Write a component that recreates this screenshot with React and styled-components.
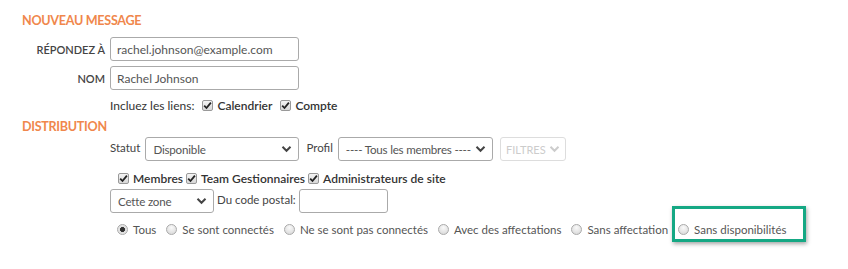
import React from 'react'
import styled, { createGlobalStyle } from 'styled-components'

const Global = createGlobalStyle`
  body {
    margin: 0;
    background: #fff;
    font-family: "Lato", "Open Sans", sans-serif;
    color: #333;
  }
`

const Chevron = () => (
  <svg width="11" height="8" viewBox="0 0 11 8">
    <path d="M1.5 1.8 L5.5 5.8 L9.5 1.8" fill="none" stroke="currentColor" strokeWidth="2" />
  </svg>
)

function Check({ label }) {
  return (
    <CheckItem>
      <CheckBox>
        <svg width="9" height="9" viewBox="0 0 9 9">
          <path d="M1.2 4.6 L3.5 7 L7.9 1.6" fill="none" stroke="#222" strokeWidth="1.8" />
        </svg>
      </CheckBox>
      {label}
    </CheckItem>
  )
}

function Radio({ label, checked, highlight }) {
  return (
    <RadioItem highlight={highlight}>
      <RadioDot checked={checked} />
      {label}
    </RadioItem>
  )
}

function Select({ value, width }) {
  return (
    <SelectBox width={width}>
      <span>{value}</span>
      <Chevron />
    </SelectBox>
  )
}

export default function App() {
  return (
    <Page>
      <Global />
      <Heading>NOUVEAU MESSAGE</Heading>
      <FieldRow>
        <FieldLabel>RÉPONDEZ À</FieldLabel>
        <Input width={189}>rachel.johnson@example.com</Input>
      </FieldRow>
      <FieldRow>
        <FieldLabel>NOM</FieldLabel>
        <Input width={189}>Rachel Johnson</Input>
      </FieldRow>
      <Indented>
        <LinksRow>
          <span>Incluez les liens:</span>
          <Check label="Calendrier" />
          <Check label="Compte" />
        </LinksRow>
      </Indented>
      <Heading second>DISTRIBUTION</Heading>
      <Indented>
        <ControlRow>
          <InlineLabel>Statut</InlineLabel>
          <Select value="Disponible" width={154} />
          <InlineLabel left={2}>Profil</InlineLabel>
          <Select value="---- Tous les membres ----" width={155} />
          <FilterButton>
            FILTRES <Chevron />
          </FilterButton>
        </ControlRow>
        <ChecksRow>
          <Check label="Membres" />
          <Check label="Team Gestionnaires" />
          <Check label="Administrateurs de site" />
        </ChecksRow>
        <ZoneRow>
          <Select value="Cette zone" width={104} />
          <InlineLabel>Du code postal:</InlineLabel>
          <Input width={89} />
        </ZoneRow>
        <RadioRow>
          <Radio label="Tous" checked />
          <Radio label="Se sont connectés" />
          <Radio label="Ne se sont pas connectés" />
          <Radio label="Avec des affectations" />
          <Radio label="Sans affectation" />
          <Radio label="Sans disponibilités" highlight />
        </RadioRow>
      </Indented>
    </Page>
  )
}

const Page = styled.div`
  padding: 13px 0 0 22px;
  width: 848px;
  height: 269px;
  box-sizing: border-box;
  white-space: nowrap;
`
const Heading = styled.div`
  color: #f0874c;
  font-weight: 700;
  font-size: 12.6px;
  letter-spacing: -0.3px;
  line-height: 15px;
  margin: ${props => (props.second ? '5px 0 3px' : '0 0 9px')};
`
const FieldRow = styled.div`
  display: flex;
  align-items: center;
  gap: 5px;
  margin-bottom: 5px;
`
const FieldLabel = styled.div`
  width: 83px;
  text-align: right;
  font-size: 11px;
  font-weight: 600;
  color: #444;
`
const Input = styled.div`
  width: ${props => props.width}px;
  flex-shrink: 0;
  height: 24px;
  box-sizing: border-box;
  border: 1px solid #aaa;
  border-radius: 3px;
  padding: 0 6px;
  display: flex;
  align-items: center;
  font-size: 12px;
  color: #555;
  background: #fff;
`
const Indented = styled.div`
  padding-left: 88px;
`
const LinksRow = styled.div`
  display: flex;
  align-items: center;
  gap: 8px;
  font-size: 12px;
  color: #333;
  height: 18px;
  margin-top: 6px;
`
const CheckItem = styled.span`
  display: inline-flex;
  align-items: center;
  gap: 4px;
  font-size: 12px;
  font-weight: 600;
  color: #333;
`
const CheckBox = styled.span`
  width: 11px;
  height: 11px;
  box-sizing: border-box;
  border: 1px solid #999;
  border-radius: 2px;
  background: linear-gradient(#f4f4f4, #d8d8d8);
  display: inline-flex;
  align-items: center;
  justify-content: center;
`
const ControlRow = styled.div`
  display: flex;
  align-items: center;
  gap: 5px;
`
const InlineLabel = styled.span`
  font-size: 11.5px;
  color: #444;
  margin-left: ${props => props.left || 0}px;
  margin-top: -4px;
`
const SelectBox = styled.div`
  width: ${props => props.width}px;
  flex-shrink: 0;
  height: 24px;
  box-sizing: border-box;
  border: 1px solid #aaa;
  border-radius: 3px;
  padding: 0 6px 0 7px;
  display: flex;
  align-items: center;
  justify-content: space-between;
  font-size: 11.6px;
  color: #555;
  span { letter-spacing: -0.2px; }
  svg { color: #444; flex-shrink: 0; }
`
const FilterButton = styled.div`
  width: 66px;
  height: 24px;
  box-sizing: border-box;
  border: 1px solid #ddd;
  border-radius: 3px;
  display: flex;
  align-items: center;
  justify-content: center;
  gap: 3px;
  font-size: 11px;
  color: #ccc;
  margin-left: 2px;
  svg { color: #ccc; }
`
const ChecksRow = styled.div`
  display: flex;
  gap: 3px;
  padding-left: 8px;
  height: 18px;
  align-items: center;
  margin: 8px 0 2px;
`
const ZoneRow = styled.div`
  display: flex;
  align-items: center;
  gap: 3px;
`
const RadioRow = styled.div`
  display: flex;
  align-items: center;
  gap: 10px;
  padding-left: 7px;
  margin-top: 10px;
`
const RadioItem = styled.span`
  position: relative;
  display: inline-flex;
  align-items: center;
  gap: 5px;
  font-size: 11.5px;
  color: #555;
  &::after {
    content: '';
    display: ${props => (props.highlight ? 'block' : 'none')};
    position: absolute;
    left: -6px;
    top: -17px;
    width: 134px;
    height: 36px;
    box-sizing: border-box;
    border: 3px solid #15a884;
    box-shadow: 1px 2px 4px rgba(0, 0, 0, 0.35);
  }
`
const RadioDot = styled.span`
  width: 11px;
  height: 11px;
  box-sizing: border-box;
  border-radius: 50%;
  border: 1px solid #aaa;
  background: ${props =>
    props.checked
      ? 'radial-gradient(circle, #333 0 2.2px, #ddd 2.8px, #f2f2f2 100%)'
      : 'radial-gradient(circle at 50% 30%, #fafafa, #d4d4d4)'};
`
